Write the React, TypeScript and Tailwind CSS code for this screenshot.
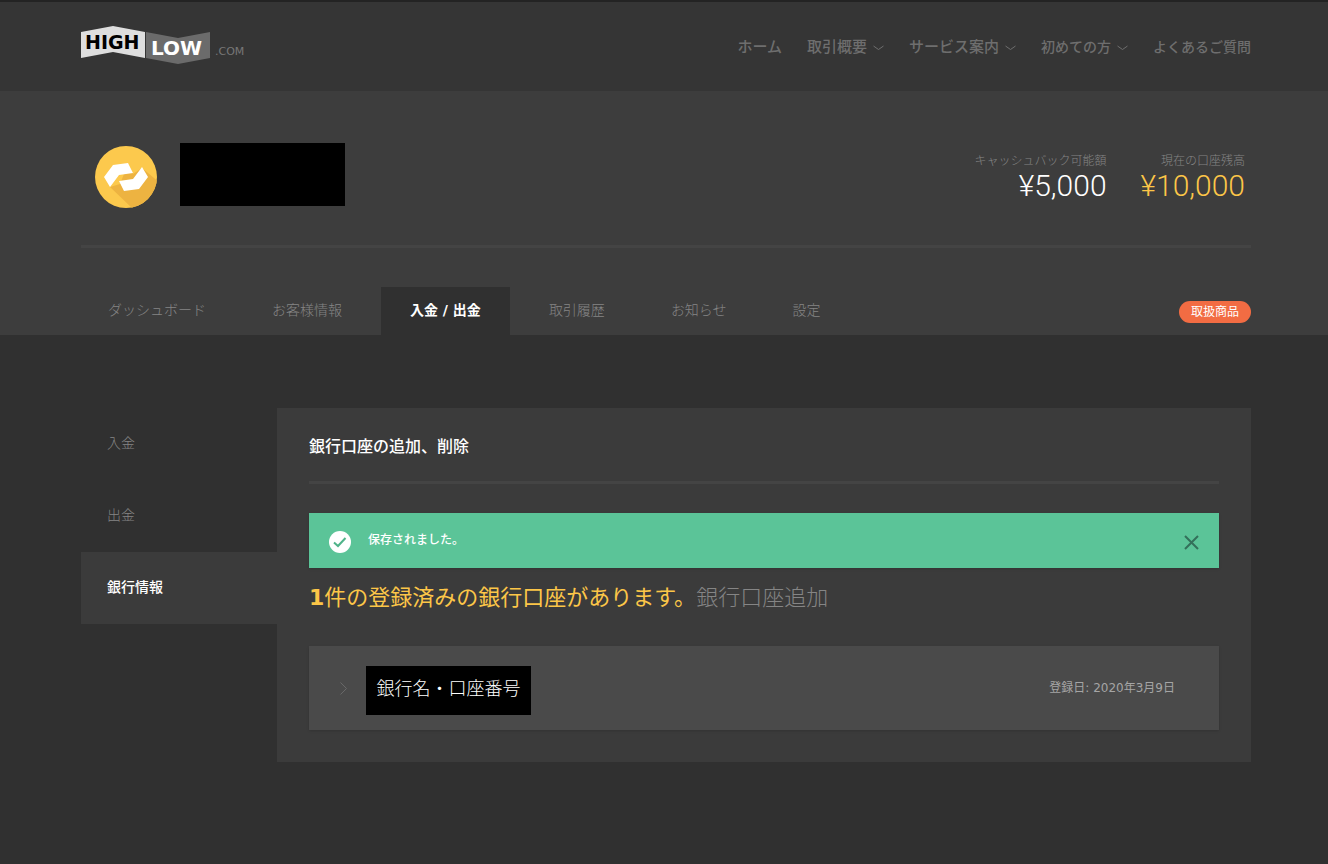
import { useState } from "react";
import { clsx } from "clsx";

type MenuItem = {
  label: string;
  hasMenu?: boolean;
  small?: boolean;
};

const menuItems: MenuItem[] = [
  { label: "ホーム" },
  { label: "取引概要", hasMenu: true },
  { label: "サービス案内", hasMenu: true },
  { label: "初めての方", hasMenu: true, small: true },
  { label: "よくあるご質問", small: true },
];

const tabs = ["ダッシュボード", "お客様情報", "入金 / 出金", "取引履歴", "お知らせ", "設定"];
const sideItems = ["入金", "出金", "銀行情報"];

function Logo() {
  return (
    <svg width="170" height="40" viewBox="0 1 170 40" role="img" aria-label="HIGH LOW .com">
      <path d="M0 6 32 0l32 6v26l-32-6-32 6z" fill="#dedede" transform="translate(0 1)" />
      <path d="M65 7l32 6 32-6v26l-32 6-32-6z" fill="#6b6b6b" />
      <g fontFamily="'DejaVu Sans', sans-serif">
        <text x="4" y="24" fontSize="19" fontWeight="700" fill="#000">HIGH</text>
        <text x="70" y="30" fontSize="20" fontWeight="700" fill="#fff">LOW</text>
        <text x="134" y="30" fontSize="11" fill="#777">.COM</text>
      </g>
    </svg>
  );
}

function Badge() {
  return (
    <svg width="62" height="62" viewBox="0 0 62 62" className="mt-[3px]" aria-hidden="true">
      <clipPath id="badge-clip">
        <circle cx="31" cy="31" r="31" />
      </clipPath>
      <circle cx="31" cy="31" r="31" fill="#fcc94d" />
      <g clipPath="url(#badge-clip)">
        <path d="M15 41l22 21 2 6h31V41L47 22l-9 6-5-10-8 20z" fill="#edb341" />
      </g>
      <path d="M18 19l15-2 5 10-14 2-9 12-6-10z" fill="#fff" />
      <path d="M24 35l14-2 9-12 6 10-9 12-15 2z" fill="#fff" />
    </svg>
  );
}

function Header() {
  return (
    <header className="border-t-2 border-[#232323] bg-[#353535] pl-1">
      <div className="mx-auto flex h-[89px] max-w-[1170px] items-center justify-between">
        <a href="#" className="pb-0.5">
          <Logo />
        </a>
        <nav className="flex items-center gap-[25px] pt-0.5 font-medium text-[#6e6e6e]">
          {menuItems.map((item) => (
            <a
              key={item.label}
              href="#"
              className={clsx("flex items-center gap-1.5", item.small ? "text-[14px]" : "text-[15px]")}
            >
              {item.label}
              {item.hasMenu && (
                <svg width="11" height="6" viewBox="0 0 11 6" fill="none" stroke="currentColor" aria-hidden="true">
                  <path d="M.5 1l5 3.5 5-3.5" />
                </svg>
              )}
            </a>
          ))}
        </nav>
      </div>
    </header>
  );
}

function Balance({ label, amount, highlight }: { label: string; amount: string; highlight?: boolean }) {
  return (
    <dl className="text-right">
      <dt className="text-[12px] leading-4 font-light text-[#858585]">{label}</dt>
      <dd
        className={clsx(
          "font-['Roboto',sans-serif] text-[30px] leading-[34px] font-light",
          highlight ? "text-[#fcc648]" : "text-white"
        )}
      >
        {amount}
      </dd>
    </dl>
  );
}

export default function App() {
  const [activeTab, setActiveTab] = useState("入金 / 出金");
  const [showMessage, setShowMessage] = useState(true);

  return (
    <div
      className="min-h-screen bg-[#303030] font-['DejaVu_Sans','Noto_Sans_CJK_JP',sans-serif] text-white"
      lang="ja"
    >
      <Header />

      <section className="bg-[#3d3d3d] pl-1">
        <div className="mx-auto max-w-[1170px]">
          <div className="flex items-start justify-between border-b-3 border-[#444] pt-[52px] pr-1.5 pb-[37px] pl-3.5">
            <div className="flex items-start gap-[23px]">
              <Badge />
              <div className="h-[63px] w-[165px] bg-black" />
            </div>
            <div className="flex gap-[34px] pt-[10px]">
              <Balance label="キャッシュバック可能額" amount="¥5,000" />
              <Balance label="現在の口座残高" amount="¥10,000" highlight />
            </div>
          </div>

          <div className="flex items-end justify-between pt-[39px]">
            <nav className="flex gap-3">
              {tabs.map((tab) => (
                <button
                  key={tab}
                  type="button"
                  onClick={() => setActiveTab(tab)}
                  className={clsx(
                    "h-12 pb-0.5 text-[14px] whitespace-pre",
                    tab === activeTab
                      ? "bg-[#303030] px-[29px] font-bold text-white"
                      : "px-[27px] font-light text-[#858585]"
                  )}
                >
                  {tab}
                </button>
              ))}
            </nav>
            <a href="#" className="mb-3 rounded-full bg-[#f26c43] px-3 text-[12px] leading-[22px]">
              取扱商品
            </a>
          </div>
        </div>
      </section>

      <main className="pt-[73px] pb-[98px] pl-1">
        <div className="mx-auto flex max-w-[1170px] items-start">
          <nav className="w-[196px] shrink-0">
            {sideItems.map((item) => (
              <a
                key={item}
                href="#"
                className={clsx(
                  "flex h-[72px] items-center pb-0.5 pl-[26px] text-[14px]",
                  item === "銀行情報" ? "bg-[#3b3b3b] font-medium text-white" : "font-light text-[#858585]"
                )}
              >
                {item}
              </a>
            ))}
          </nav>

          <section className="min-w-0 flex-1 bg-[#3b3b3b] px-8 pb-8">
            <h1 className="border-b-3 border-[#444] pt-[27px] pb-[22px] text-[16px] leading-6 font-medium">
              銀行口座の追加、削除
            </h1>

            {showMessage && (
              <div className="mt-[29px] flex h-[55px] items-center bg-[#5bc498] px-5 shadow-sm" role="status">
                <svg width="22" height="22" viewBox="0 0 22 22" className="mt-0.5" aria-hidden="true">
                  <circle cx="11" cy="11" r="11" fill="#fff" />
                  <path d="M5 11.5l4 3.5 7.5-8" fill="none" stroke="#4fb389" strokeWidth="2" />
                </svg>
                <p className="flex-1 pb-0.5 pl-[17px] text-[12px] leading-4 font-medium">保存されました。</p>
                <button type="button" aria-label="閉じる" onClick={() => setShowMessage(false)} className="mt-1">
                  <svg width="15" height="15" viewBox="0 0 15 15" stroke="#33705a" strokeWidth="2" aria-hidden="true">
                    <path d="M1 1l13 13M14 1L1 14" />
                  </svg>
                </button>
              </div>
            )}

            <p className="mt-3.5 text-[22px] leading-8 text-[#fcc648]">
              <strong>1</strong>件の登録済みの銀行口座があります。
              <a href="#" className="font-light text-[#858585]">
                銀行口座追加
              </a>
            </p>

            <div className="mt-8 flex h-[84px] items-center bg-[#4a4a4a] pr-11 pl-[31px] shadow-sm">
              <svg width="7" height="13" viewBox="0 0 7 13" fill="none" stroke="#686868" className="mr-[19px]" aria-hidden="true">
                <path d="M.5.5l6 6-6 6" />
              </svg>
              <div className="mt-1 flex h-[49px] w-[165px] items-center justify-center bg-black pb-1 text-[18px] font-light">
                銀行名・口座番号
              </div>
              <span className="ml-auto text-[12px] text-[#a5a5a5]">登録日: 2020年3月9日</span>
            </div>
          </section>
        </div>
      </main>
    </div>
  );
}
